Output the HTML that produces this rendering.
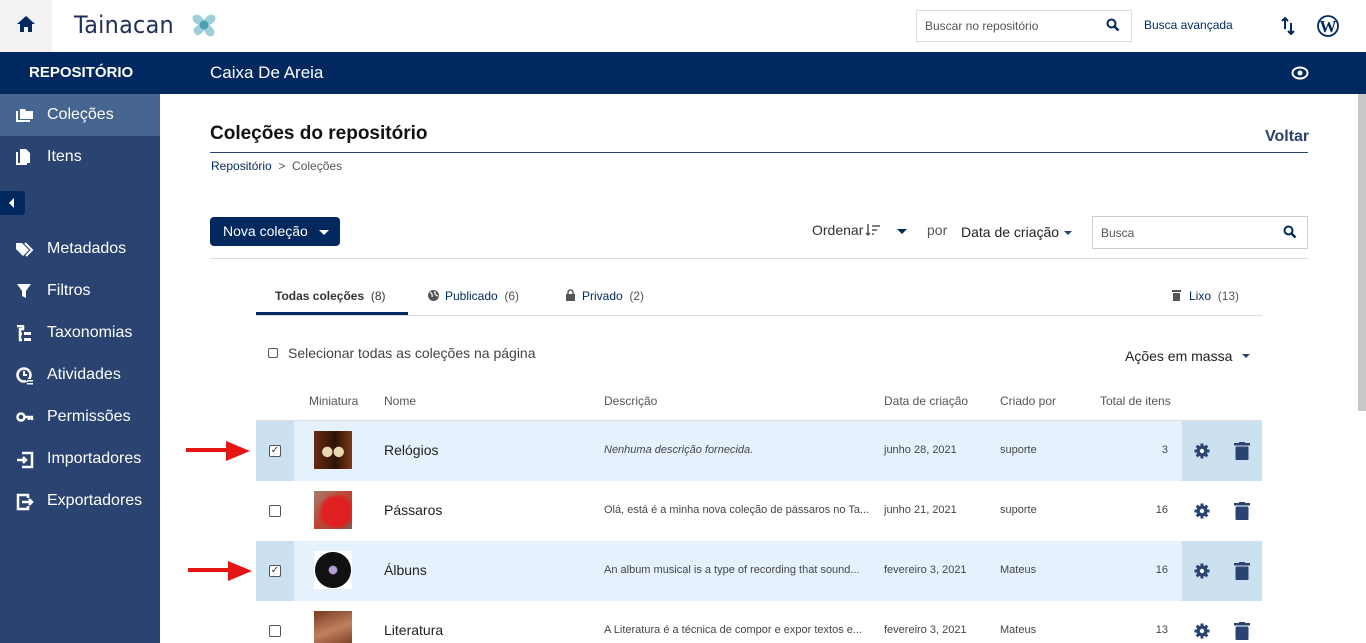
<!DOCTYPE html>
<html><head><meta charset="utf-8"><style>
*{box-sizing:border-box;margin:0;padding:0}
html,body{width:1366px;height:643px;overflow:hidden}
body{font-family:"Liberation Sans",Arial,sans-serif;background:#fff;position:relative;color:#1d1d1d}
.a{position:absolute}
.side a{position:absolute;left:0;width:160px;height:42px;color:#fff;font-size:16px;display:flex;align-items:center;padding-left:47px}
.side svg{position:absolute;left:16px;top:13px}
.th{position:absolute;top:394px;font-size:12px;color:#555}
.row{position:absolute;left:256px;width:1006px;height:60px}
.row.sel{background:#e5f2fd}
.row .cb{position:absolute;left:0;top:0;width:38px;height:60px}
.row.sel .cb,.row.sel .act{background:#cbe1ef}
.row .act{position:absolute;left:926px;width:80px;height:60px;top:0}
.box{position:absolute;left:13px;top:24px;width:12px;height:12px;border:1px solid #555;border-radius:2px;background:#fff;font-size:10px;line-height:10px;text-align:center;color:#333}
.thumb{position:absolute;left:58px;top:10px;width:38px;height:38px}
.nm{position:absolute;left:128px;top:21px;font-size:14px;color:#222}
.ds{position:absolute;left:348px;top:23px;font-size:11px;color:#454545}
.dt{position:absolute;left:628px;top:23px;font-size:11px;color:#454545}
.by{position:absolute;left:744px;top:23px;font-size:11px;color:#454545}
.tot{position:absolute;right:94px;top:23px;font-size:11px;color:#454545}
</style></head><body>
<div class="a" style="left:0;top:0;width:52px;height:52px;background:#f2f2f2"></div>
<svg class="a" style="left:16px;top:15px" width="20" height="18" viewBox="0 0 20 18"><path d="M10 1 L1 9 H4 V17 H8 V12 H12 V17 H16 V9 H19 Z" fill="#01295f"/></svg>
<div class="a" style="left:74px;top:11px;font-size:24px;color:#1c2f56;letter-spacing:0.3px;font-family:'DejaVu Sans',sans-serif;transform:scaleX(0.93);transform-origin:left">Tainacan</div>
<svg class="a" style="left:191px;top:12px" width="26" height="26" viewBox="0 0 26 26"><path d="M2 4 Q8 0 13 8 Q18 0 24 4 Q26 10 18 13 Q26 18 22 24 Q16 26 13 18 Q8 26 4 22 Q0 16 8 13 Q0 10 2 4Z" fill="#9fcfdb"/><circle cx="13" cy="13" r="4.5" fill="#4f9fb3"/></svg>
<div class="a" style="left:916px;top:10px;width:216px;height:32px;border:1px solid #ddd"></div>
<div class="a" style="left:925px;top:19px;font-size:12px;color:#555">Buscar no repositório</div>
<svg class="a" style="left:1106px;top:18px" width="14" height="14" viewBox="0 0 14 14"><circle cx="5.5" cy="5.5" r="4" stroke="#01295f" stroke-width="2" fill="none"/><path d="M8.5 8.5 L12.5 12.5" stroke="#01295f" stroke-width="2.5"/></svg>
<div class="a" style="left:1144px;top:18px;font-size:12px;color:#01295f">Busca avançada</div>
<svg class="a" style="left:1280px;top:16px" width="16" height="20" viewBox="0 0 16 20"><path d="M5 2 V13 M2 5 L5 2 L8 5 M11 7 V18 M8 15 L11 18 L14 15" stroke="#01295f" stroke-width="2" fill="none"/></svg>
<svg class="a" style="left:1317px;top:15px" width="22" height="22" viewBox="0 0 22 22"><circle cx="11" cy="11" r="10" stroke="#01295f" stroke-width="1.8" fill="none"/><text x="11" y="17" font-size="17" font-weight="bold" text-anchor="middle" fill="#01295f" font-family="Liberation Serif">W</text></svg>
<div class="a" style="left:0;top:52px;width:1366px;height:42px;background:#01295f"></div>
<div class="a" style="left:29px;top:64px;font-size:15px;font-weight:bold;color:#fff">REPOSITÓRIO</div>
<div class="a" style="left:210px;top:63px;font-size:17px;color:#fff">Caixa De Areia</div>
<svg class="a" style="left:1291px;top:66px" width="18" height="14" viewBox="0 0 18 14"><ellipse cx="9" cy="7" rx="7.5" ry="5.5" stroke="#fff" stroke-width="2" fill="none"/><circle cx="9" cy="7" r="2.5" fill="#fff"/></svg>
<div class="a side" style="left:0;top:94px;width:160px;height:549px;background:#2a4370">
<a style="top:0;background:#466591"><svg width="18" height="16" viewBox="0 0 18 16"><path d="M1 4 V14 H14" stroke="#fff" stroke-width="2" fill="none"/><path d="M4 2 H9 L10 4 H17 V12 H4 Z" fill="#fff"/></svg>Coleções</a>
<a style="top:42px"><svg width="16" height="18" viewBox="0 0 16 18"><path d="M1 3 V15 H11" stroke="#fff" stroke-width="2" fill="none"/><path d="M4 0 H10 L14 4 V14 H4 Z" fill="#fff"/></svg>Itens</a>
<a style="top:134px"><svg width="18" height="16" viewBox="0 0 18 16"><path d="M0 2 V8 L7 15 L13 9 L6 2 Z" fill="#fff"/><path d="M9 2 L16 9 L10 15" stroke="#fff" stroke-width="2" fill="none"/></svg>Metadados</a>
<a style="top:176px"><svg width="16" height="16" viewBox="0 0 16 16"><path d="M1 1 H15 L10 8 V15 L6 13 V8 Z" fill="#fff"/></svg>Filtros</a>
<a style="top:218px"><svg width="16" height="18" viewBox="0 0 16 18"><path d="M1 1 H7 V4 H4 V9 H6 M4 9 V15 H6" stroke="#fff" stroke-width="2.5" fill="none"/><rect x="8" y="7" width="7" height="3" fill="#fff"/><rect x="8" y="13" width="7" height="3" fill="#fff"/></svg>Taxonomias</a>
<a style="top:260px"><svg width="18" height="18" viewBox="0 0 18 18"><circle cx="8" cy="8" r="6.5" stroke="#fff" stroke-width="2.5" fill="none"/><path d="M8 4 V8 H11" stroke="#fff" stroke-width="2" fill="none"/><rect x="10" y="12" width="8" height="2" fill="#2a4370"/><rect x="11" y="13" width="6" height="1.5" fill="#fff"/><rect x="11" y="16" width="6" height="1.5" fill="#fff"/></svg>Atividades</a>
<a style="top:302px"><svg width="18" height="16" viewBox="0 0 18 16"><circle cx="5" cy="8" r="3.5" stroke="#fff" stroke-width="2.5" fill="none"/><path d="M8 8 H17 M13 8 V11 M16 8 V11" stroke="#fff" stroke-width="2.5"/></svg>Permissões</a>
<a style="top:344px"><svg width="18" height="18" viewBox="0 0 18 18"><path d="M6 2 H16 V16 H6" stroke="#fff" stroke-width="2.5" fill="none"/><path d="M1 9 H10 M7 6 L10 9 L7 12" stroke="#fff" stroke-width="2.5" fill="none"/></svg>Importadores</a>
<a style="top:386px"><svg width="18" height="18" viewBox="0 0 18 18"><path d="M12 5 V2 H2 V16 H12 V13" stroke="#fff" stroke-width="2.5" fill="none"/><path d="M6 9 H16 M13 6 L16 9 L13 12" stroke="#fff" stroke-width="2.5" fill="none"/></svg>Exportadores</a>
</div>
<div class="a" style="left:0;top:191px;width:25px;height:24px;background:#01295f;border-radius:0 3px 3px 0"></div>
<svg class="a" style="left:9px;top:198px" width="6" height="10"><path d="M5 0 V10 L0 5 Z" fill="#fff"/></svg>
<div class="a" style="left:1358px;top:94px;width:8px;height:317px;background:#c8c8c8"></div>
<div class="a" style="left:210px;top:123px;font-size:19px;font-weight:bold;color:#111">Coleções do repositório</div>
<div class="a" style="left:1265px;top:128px;font-size:16px;font-weight:bold;color:#2a4370">Voltar</div>
<div class="a" style="left:210px;top:152px;width:1098px;height:1px;background:#2a4370"></div>
<div class="a" style="left:211px;top:159px;font-size:12px;color:#01295f">Repositório <span style="color:#555">&nbsp;&gt;&nbsp; Coleções</span></div>
<div class="a" style="left:210px;top:217px;width:130px;height:29px;background:#01295f;border-radius:4px;color:#fff;font-size:14px;padding:6px 0 0 13px">Nova coleção</div>
<svg class="a" style="left:319px;top:230px" width="10" height="5"><path d="M0 0 H10 L5 5Z" fill="#fff"/></svg>
<div class="a" style="left:812px;top:222px;font-size:14px;color:#333">Ordenar</div>
<svg class="a" style="left:865px;top:223px" width="16" height="14" viewBox="0 0 16 14"><path d="M3 1 V12 M1 10 L3 12 L5 10" stroke="#555" stroke-width="1.5" fill="none"/><path d="M7 3 H15 M7 7 H12 M7 11 H9" stroke="#555" stroke-width="1.5"/></svg>
<svg class="a" style="left:897px;top:229px" width="10" height="5"><path d="M0 0 H10 L5 5Z" fill="#01295f"/></svg>
<div class="a" style="left:927px;top:222px;font-size:14px;color:#555">por</div>
<div class="a" style="left:961px;top:224px;font-size:14px;color:#222">Data de criação</div>
<svg class="a" style="left:1064px;top:231px" width="8" height="4"><path d="M0 0 H8 L4 4Z" fill="#2a4370"/></svg>
<div class="a" style="left:1092px;top:216px;width:216px;height:33px;border:1px solid #ccc"></div>
<div class="a" style="left:1101px;top:226px;font-size:12px;color:#555">Busca</div>
<svg class="a" style="left:1283px;top:225px" width="14" height="14" viewBox="0 0 14 14"><circle cx="5.5" cy="5.5" r="4" stroke="#01295f" stroke-width="2" fill="none"/><path d="M8.5 8.5 L12.5 12.5" stroke="#01295f" stroke-width="2.5"/></svg>
<div class="a" style="left:210px;top:258px;width:1098px;height:1px;background:#ddd"></div>
<div class="a" style="left:275px;top:289px;font-size:12px;font-weight:bold;color:#333">Todas coleções <span style="font-weight:normal">&nbsp;(8)</span></div>
<div class="a" style="left:256px;top:312px;width:152px;height:3px;background:#01295f"></div>
<svg class="a" style="left:427px;top:289px" width="13" height="13" viewBox="0 0 13 13"><circle cx="6.5" cy="6.5" r="5.5" fill="#555"/><path d="M3 3 Q6 5 5 8 M8 2 Q7 6 11 7" stroke="#fff" stroke-width="1.2" fill="none"/></svg>
<div class="a" style="left:445px;top:289px;font-size:12px;color:#01295f">Publicado <span style="color:#555">&nbsp;(6)</span></div>
<svg class="a" style="left:565px;top:289px" width="11" height="12" viewBox="0 0 11 12"><path d="M3 5 V3.5 A2.5 2.5 0 0 1 8 3.5 V5" stroke="#555" stroke-width="1.5" fill="none"/><rect x="1" y="5" width="9" height="7" fill="#555"/></svg>
<div class="a" style="left:582px;top:289px;font-size:12px;color:#01295f">Privado <span style="color:#555">&nbsp;(2)</span></div>
<svg class="a" style="left:1172px;top:290px" width="9" height="11"><rect x="0" y="0" width="9" height="2" fill="#555"/><rect x="1" y="3" width="7" height="8" fill="#555"/></svg>
<div class="a" style="left:1189px;top:289px;font-size:12px;color:#01295f">Lixo <span style="color:#555">&nbsp;(13)</span></div>
<div class="a" style="left:256px;top:315px;width:1006px;height:1px;background:#ddd"></div>
<div class="a" style="left:268px;top:348px;width:10px;height:10px;border:1px solid #555;border-radius:2px"></div>
<div class="a" style="left:288px;top:345px;font-size:14px;color:#444">Selecionar todas as coleções na página</div>
<div class="a" style="left:1125px;top:348px;font-size:14px;color:#222">Ações em massa</div>
<svg class="a" style="left:1242px;top:354px" width="8" height="4"><path d="M0 0 H8 L4 4Z" fill="#2a4370"/></svg>
<div class="th" style="left:309px">Miniatura</div>
<div class="th" style="left:384px">Nome</div>
<div class="th" style="left:604px">Descrição</div>
<div class="th" style="left:884px">Data de criação</div>
<div class="th" style="left:1000px">Criado por</div>
<div class="th" style="left:1100px">Total de itens</div>
<div class="a" style="left:256px;top:420px;width:1006px;height:1px;background:#ddd"></div>

<div class="row sel" style="top:421px"><div class="cb"><div class="box">✓</div></div>
<div class="thumb" style="background:radial-gradient(circle at 35% 55%,#e8d8b0 0 15%,transparent 17%),radial-gradient(circle at 65% 55%,#e8d8b0 0 15%,transparent 17%),linear-gradient(90deg,#6a2a10,#3a1a08 45%,#2a1208 55%,#7a3a14)"></div>
<div class="nm">Relógios</div><div class="ds"><i>Nenhuma descrição fornecida.</i></div><div class="dt">junho 28, 2021</div><div class="by">suporte</div><div class="tot">3</div>
<div class="act"></div></div>

<div class="row" style="top:481px"><div class="cb"><div class="box"></div></div>
<div class="thumb" style="background:radial-gradient(circle at 60% 55%,#e02020 0 45%,transparent 60%),linear-gradient(135deg,#a08070,#c04030 50%,#806050)"></div>
<div class="nm">Pássaros</div><div class="ds">Olá, está é a minha nova coleção de pássaros no Ta...</div><div class="dt">junho 21, 2021</div><div class="by">suporte</div><div class="tot">16</div>
<div class="act"></div></div>

<div class="row sel" style="top:541px"><div class="cb"><div class="box">✓</div></div>
<div class="thumb" style="background:radial-gradient(circle,#b0a0d0 0 14%,#111 18% 66%,#fff 68%)"></div>
<div class="nm">Álbuns</div><div class="ds">An album musical is a type of recording that sound...</div><div class="dt">fevereiro 3, 2021</div><div class="by">Mateus</div><div class="tot">16</div>
<div class="act"></div></div>

<div class="row" style="top:601px"><div class="cb"><div class="box"></div></div>
<div class="thumb" style="background:linear-gradient(160deg,#7a3a20,#c08060 50%,#6a3018)"></div>
<div class="nm">Literatura</div><div class="ds">A Literatura é a técnica de compor e expor textos e...</div><div class="dt">fevereiro 3, 2021</div><div class="by">Mateus</div><div class="tot">13</div>
<div class="act"></div></div>

<svg width="0" height="0" style="position:absolute"><defs>
<g id="gear"><circle cx="8" cy="8" r="5.5" fill="#2a4370"/><path d="M8 0.5 V15.5 M0.5 8 H15.5 M2.7 2.7 L13.3 13.3 M13.3 2.7 L2.7 13.3" stroke="#2a4370" stroke-width="3"/><circle cx="8" cy="8" r="2.2" fill="#fff"/></g>
<g id="trash"><rect x="0" y="1" width="16" height="2.5" fill="#2a4370"/><rect x="5" y="0" width="6" height="2" fill="#2a4370"/><rect x="1.5" y="4.5" width="13" height="13.5" rx="1" fill="#2a4370"/></g>
</defs></svg>
<svg class="a" style="left:1194px;top:443px" width="16" height="16"><use href="#gear"/></svg>
<svg class="a" style="left:1234px;top:442px" width="16" height="18"><use href="#trash"/></svg>
<svg class="a" style="left:1194px;top:503px" width="16" height="16"><use href="#gear"/></svg>
<svg class="a" style="left:1234px;top:502px" width="16" height="18"><use href="#trash"/></svg>
<svg class="a" style="left:1194px;top:563px" width="16" height="16"><use href="#gear"/></svg>
<svg class="a" style="left:1234px;top:562px" width="16" height="18"><use href="#trash"/></svg>
<svg class="a" style="left:1194px;top:623px" width="16" height="16"><use href="#gear"/></svg>
<svg class="a" style="left:1234px;top:622px" width="16" height="18"><use href="#trash"/></svg>
<svg class="a" style="left:186px;top:439px" width="64" height="24"><path d="M0 11 H44" stroke="#e41515" stroke-width="4"/><path d="M40 2 L64 12 L40 22 Z" fill="#e41515"/></svg>
<svg class="a" style="left:188px;top:559px" width="64" height="24"><path d="M0 11 H44" stroke="#e41515" stroke-width="4"/><path d="M40 2 L64 12 L40 22 Z" fill="#e41515"/></svg>
</body></html>
